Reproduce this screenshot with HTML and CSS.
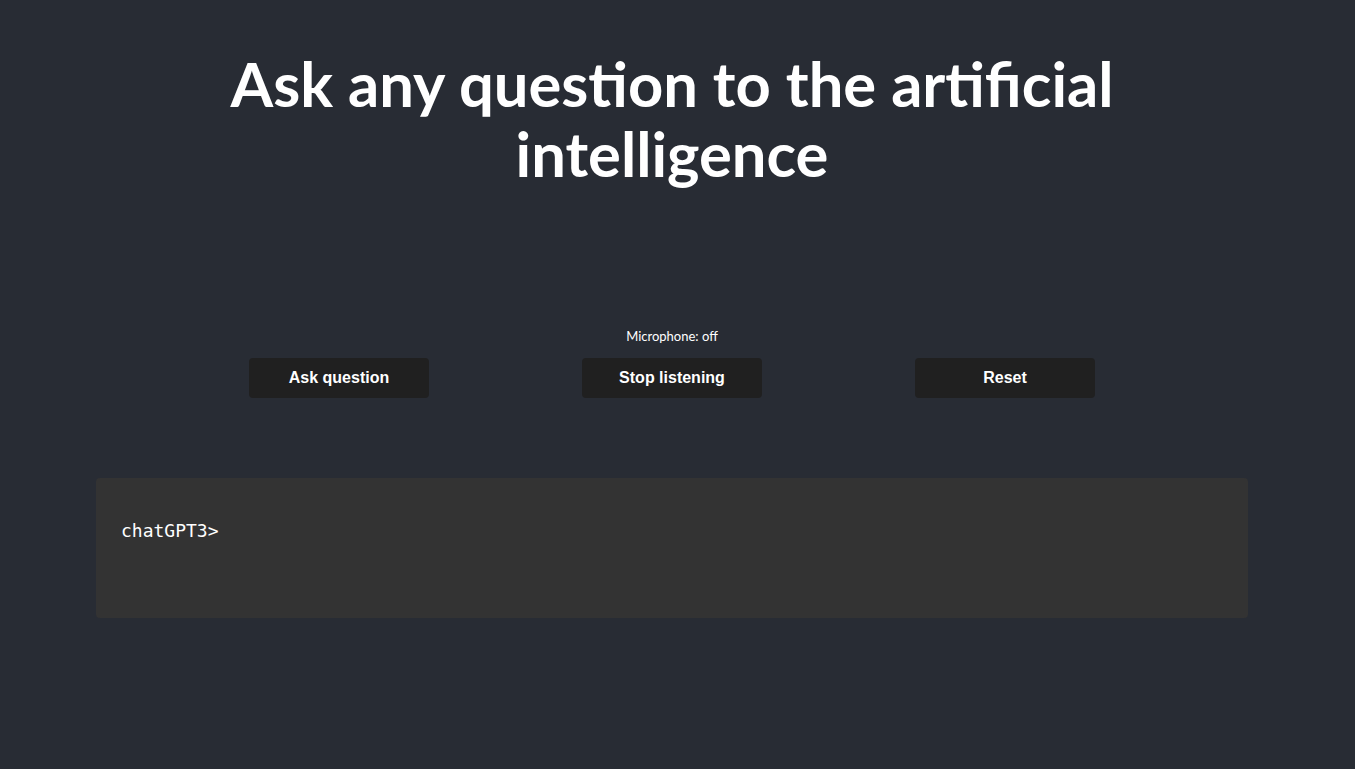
FILE: index.html
```html
<!DOCTYPE html>
<html lang="en">
<head>
<meta charset="utf-8">
<title>Ask the AI</title>
<link rel="stylesheet" href="styles.css">
</head>
<body>
<main class="app">
  <h1 class="title">Ask any question to the artificial intelligence</h1>
  <p class="mic-status">Microphone: off</p>
  <div class="controls">
    <button class="btn">Ask question</button>
    <button class="btn">Stop listening</button>
    <button class="btn">Reset</button>
  </div>
  <section class="output">
    <pre class="prompt">chatGPT3&gt;</pre>
  </section>
</main>
</body>
</html>
```
FILE: styles.css
```css
html, body {
  margin: 0;
  padding: 0;
  background: #282c34;
  height: 100%;
}
.app {
  width: 1344px;
  display: flex;
  flex-direction: column;
  align-items: center;
  color: #ffffff;
}
.title {
  margin: 48px 0 0;
  width: 960px;
  text-align: center;
  font-family: Lato, "Open Sans", sans-serif;
  font-weight: 700;
  font-size: 61.5px;
  line-height: 70px;
  letter-spacing: 0;
}
.mic-status {
  margin: 140px 0 0;
  font-family: Lato, sans-serif;
  font-size: 13px;
  line-height: 16px;
}
.controls {
  margin-top: 14px;
  width: 999px;
  display: flex;
  justify-content: space-around;
}
.btn {
  width: 180px;
  height: 40px;
  border: none;
  border-radius: 4px;
  background: #202020;
  color: #ffffff;
  font-family: "Liberation Sans", Arial, sans-serif;
  font-weight: 700;
  font-size: 16px;
}
.output {
  margin-top: 80px;
  width: 1152px;
  height: 140px;
  box-sizing: border-box;
  padding: 42px 25px;
  background: #333333;
  border-radius: 4px;
}
.prompt {
  margin: 0;
  font-family: "DejaVu Sans Mono", monospace;
  font-size: 18px;
  line-height: 22px;
  color: #ffffff;
}
```
